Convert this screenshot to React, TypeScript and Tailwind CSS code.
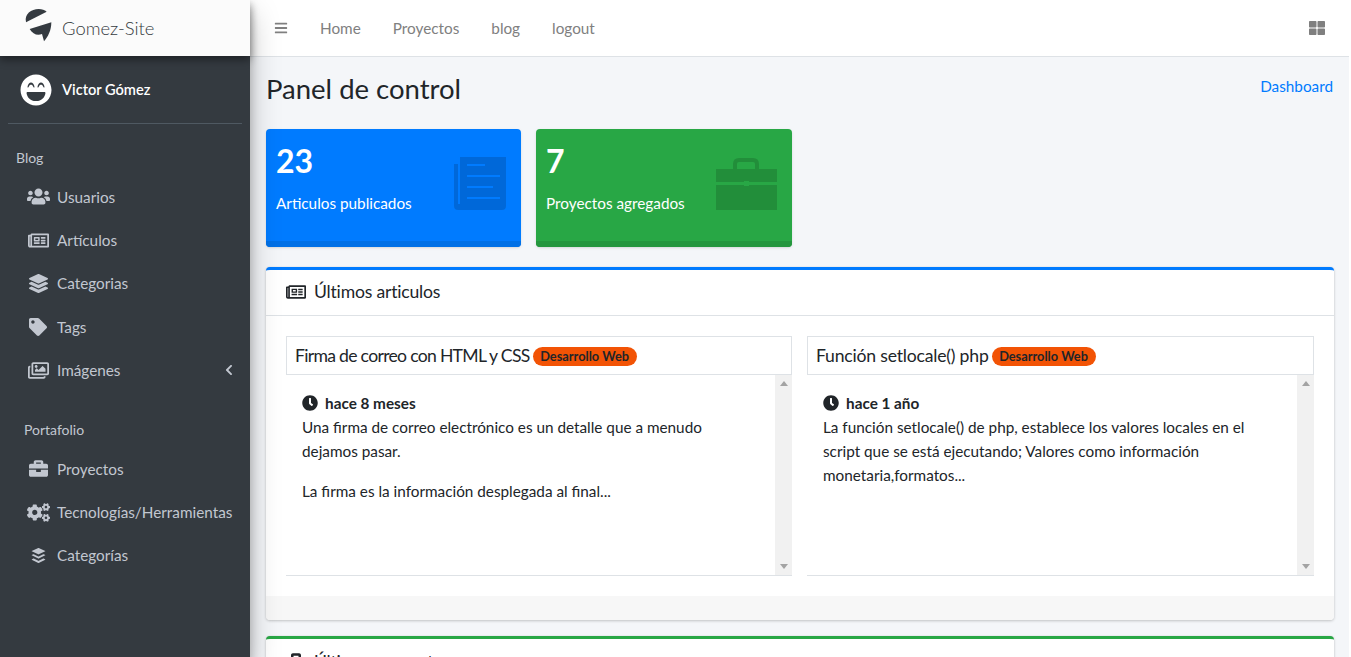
import type { ReactNode } from 'react';
import {
  FaBars,
  FaBriefcase,
  FaBuffer,
  FaClock,
  FaCogs,
  FaChevronLeft,
  FaLaughBeam,
  FaLayerGroup,
  FaRegImages,
  FaRegNewspaper,
  FaTag,
  FaThLarge,
  FaUsers,
} from 'react-icons/fa';

const NavItem = ({ icon, label, arrow }: { icon: ReactNode; label: string; arrow?: boolean }) => (
  <li className="flex h-[43.4px] items-center pl-[26px] pr-4 text-[#c2c7d0]">
    <span className="flex w-[24px] shrink-0 justify-center text-[#c2c7d0]">{icon}</span>
    <span className="ml-[7px] whitespace-nowrap">{label}</span>
    {arrow && <FaChevronLeft size={12} className="ml-auto -mr-[1px] text-[#c2c7d0]" />}
  </li>
);

const PaperIcon = () => (
  <svg width="80" height="70" viewBox="0 0 80 70" fill="currentColor" fillRule="evenodd">
    <path d="M20 7H66V56Q66 60 62 60H18Q14 60 14 56V14H18V54H20ZM27 14V16H45V14ZM27 25V27H60V25ZM27 36V38H53V36ZM27 47V49H60V47Z" />
  </svg>
);

const CaseIcon = () => (
  <svg width="80" height="70" viewBox="0 0 80 70" fill="currentColor">
    <path d="M11 19H72V32H44V31H39V32H11Z" />
    <path d="M11 35H39V36H44V35H72V60H11Z" />
    <path d="M30 19V14Q30 10 34 10H48Q52 10 52 14V19" fill="none" stroke="currentColor" strokeWidth="4" />
  </svg>
);

const StatCard = ({
  color,
  footer,
  value,
  label,
  icon,
  iconPos,
}: {
  color: string;
  footer: string;
  value: string;
  label: string;
  icon: ReactNode;
  iconPos: string;
}) => (
  <div className={`relative h-[118px] overflow-hidden rounded text-white shadow-sm ${color}`}>
    <div className="px-[10px] pt-[10px]">
      <p className="text-[32px] font-bold leading-[44px]">{value}</p>
      <p className="mt-[8px] leading-6">{label}</p>
    </div>
    <div className={`absolute top-[21px] text-black/15 ${iconPos}`}>{icon}</div>
    <div className={`absolute inset-x-0 bottom-0 h-[6px] ${footer}`} />
  </div>
);

const ScrollBar = () => (
  <div className="flex w-[17px] shrink-0 flex-col items-center justify-between bg-[#f1f1f1] py-[6px]">
    <span className="h-0 w-0 border-x-[4px] border-b-[5px] border-x-transparent border-b-[#a3a3a3]" />
    <span className="h-0 w-0 border-x-[4px] border-t-[5px] border-x-transparent border-t-[#a3a3a3]" />
  </div>
);

const Article = ({
  title,
  titleClass,
  time,
  children,
}: {
  title: string;
  titleClass: string;
  time: string;
  children: ReactNode;
}) => (
  <div>
    <div className="flex h-[39px] items-center border border-[#dee2e6] pl-2">
      <span className={`text-[17.6px] ${titleClass}`}>{title}</span>
      <span className="ml-[3px] mt-[1px] w-[104px] rounded-full bg-[#f25305] text-center text-[12.8px] font-bold leading-[19px]">
        Desarrollo Web
      </span>
    </div>
    <div className="flex h-[201px] border-b border-[#dee2e6]">
      <div className="flex-1 pl-4 pr-6 pt-4">
        <p className="flex h-6 items-center font-bold">
          <FaClock size={16} className="mr-[7px]" />
          {time}
        </p>
        {children}
      </div>
      <ScrollBar />
    </div>
  </div>
);

export default function App() {
  return (
    <div className="flex h-screen overflow-hidden bg-white font-['Lato',sans-serif] text-[15.3px] leading-6 text-[#212529]">
      <aside className="z-10 flex h-full w-[250px] shrink-0 flex-col bg-[#343a40] shadow-[0_14px_28px_rgba(0,0,0,0.25),0_10px_10px_rgba(0,0,0,0.22)]">
        <div className="flex h-[56px] items-center bg-[#fbfbfb] pl-[18px] shadow-[0_4px_8px_rgba(0,0,0,0.4)]">
          <svg width="40" height="44" viewBox="0 0 120 132" fill="#343a40" className="-mt-[4px]">
            <path d="M24 55C18 30 40 15 62 15C72 15 80 18 86 23Z" />
            <path d="M35 75L100 55C100 80 90 98 78 112L72 90C58 96 44 90 35 75Z" />
          </svg>
          <span className="ml-[4px] text-[18.4px] font-light text-[#343a40]">Gomez-Site</span>
        </div>
        <div className="mx-2 flex h-[68px] items-center border-b border-[#4f5962] pl-3">
          <span className="flex h-8 w-8 items-center justify-center rounded-full bg-[#343a40] text-white">
            <FaLaughBeam size={32} />
          </span>
          <span className="ml-[10px] mt-[1px] text-[14.6px] font-semibold text-white">Victor Gómez</span>
        </div>
        <nav className="mt-[21px]">
          <p className="pl-4 text-[14px] leading-[26px] text-[#c2c7d0]">Blog</p>
          <ul className="mt-1">
            <NavItem icon={<FaUsers size={23} />} label="Usuarios" />
            <NavItem icon={<FaRegNewspaper size={21} />} label="Artículos" />
            <NavItem icon={<FaLayerGroup size={19} />} label="Categorias" />
            <NavItem icon={<FaTag size={18} />} label="Tags" />
            <NavItem icon={<FaRegImages size={21} />} label="Imágenes" arrow />
          </ul>
          <p className="mt-[25px] pl-6 text-[14px] leading-[26px] text-[#c2c7d0]">Portafolio</p>
          <ul className="mt-1">
            <NavItem icon={<FaBriefcase size={19} />} label="Proyectos" />
            <NavItem icon={<FaCogs size={23} />} label="Tecnologías/Herramientas" />
            <NavItem icon={<FaBuffer size={17} />} label="Categorías" />
          </ul>
        </nav>
      </aside>

      <div className="mr-[2px] min-w-0 flex-1 bg-[#f4f6f9]">
        <header className="flex h-[57px] items-center border-b border-[#dee2e6] bg-white pl-6 pr-4 text-[#808080]">
          <FaBars size={14} className="mr-[16px]" />
          <a className="px-4">Home</a>
          <a className="px-4">Proyectos</a>
          <a className="px-4">blog</a>
          <a className="px-4">logout</a>
          <FaThLarge size={16} className="ml-auto mr-[8px] text-[#7f7f7f]" />
        </header>

        <main className="pl-4 pr-[15px]">
          <div className="mb-2 flex h-[64px] items-center justify-between pr-px">
            <h1 className="text-[27.5px] leading-[34px]">Panel de control</h1>
            <a className="-mt-[6px] text-[#007bff]">Dashboard</a>
          </div>

          <div className="grid grid-cols-[255px_256px_1fr_1fr] gap-[15px]">
            <StatCard
              color="bg-[#007bff]"
              footer="bg-[#0070e6]"
              value="23"
              label="Articulos publicados"
              icon={<PaperIcon />}
              iconPos="right-[1px]"
            />
            <StatCard
              color="bg-[#28a745]"
              footer="bg-[#24963e]"
              value="7"
              label="Proyectos agregados"
              icon={<CaseIcon />}
              iconPos="right-[7px]"
            />
          </div>

          <section className="mt-5 rounded border-t-[3px] border-[#007bff] bg-white shadow-[0_0_1px_rgba(0,0,0,0.13),0_1px_3px_rgba(0,0,0,0.2)]">
            <div className="flex h-[46px] items-center border-b border-[#dee2e6] pb-[2px] pl-5">
              <FaRegNewspaper size={20} className="mr-[8px]" />
              <span className="text-[17.6px] tracking-[-0.2px]">Últimos articulos</span>
            </div>
            <div className="grid grid-cols-[506px_1fr] gap-[15px] p-5">
              <Article title="Firma de correo con HTML y CSS" titleClass="tracking-[-0.7px]" time="hace 8 meses">
                <p>Una firma de correo electrónico es un detalle que a menudo dejamos pasar.</p>
                <p className="mt-4">La firma es la información desplegada al final...</p>
              </Article>
              <Article title="Función setlocale() php" titleClass="tracking-[-0.2px]" time="hace 1 año">
                <p>
                  La función setlocale() de php, establece los valores locales en el script que se está ejecutando;
                  Valores como información monetaria,formatos...
                </p>
              </Article>
            </div>
            <div className="h-6 rounded-b bg-[#f7f7f7]" />
          </section>

          <section className="mt-4 rounded border-t-[3px] border-[#28a745] bg-white shadow-[0_0_1px_rgba(0,0,0,0.13),0_1px_3px_rgba(0,0,0,0.2)]">
            <div className="flex h-[46px] items-center border-b border-[#dee2e6] pl-5">
              <FaBriefcase size={20} className="mr-[8px]" />
              <span className="text-[17.6px] tracking-[-0.2px]">Últimos proyectos</span>
            </div>
          </section>
        </main>
      </div>
    </div>
  );
}
